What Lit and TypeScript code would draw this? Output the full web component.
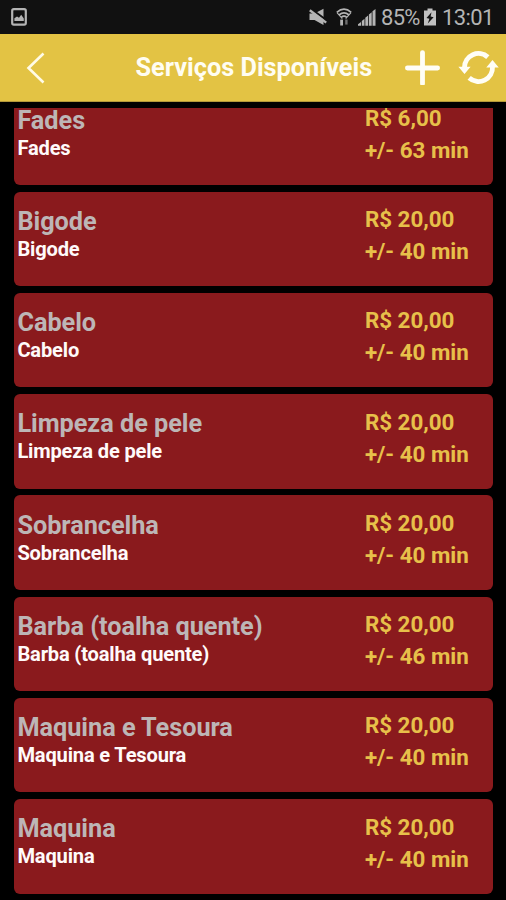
import { LitElement, html, css } from "lit";
import { customElement, property } from "lit/decorators.js";

interface Service {
  name: string;
  price: string;
  minutes: number;
}

const SERVICES: Service[] = [
  { name: "Fades", price: "6,00", minutes: 63 },
  { name: "Bigode", price: "20,00", minutes: 40 },
  { name: "Cabelo", price: "20,00", minutes: 40 },
  { name: "Limpeza de pele", price: "20,00", minutes: 40 },
  { name: "Sobrancelha", price: "20,00", minutes: 40 },
  { name: "Barba (toalha quente)", price: "20,00", minutes: 46 },
  { name: "Maquina e Tesoura", price: "20,00", minutes: 40 },
  { name: "Maquina", price: "20,00", minutes: 40 },
];

@customElement("status-bar")
class StatusBar extends LitElement {
  static styles = css`
    :host {
      display: flex;
      align-items: center;
      height: 34px;
      box-sizing: border-box;
      padding: 0 12px 0 11px;
      background: #111;
      color: #b4b4b4;
      font: 400 22px/34px Roboto, sans-serif;
      white-space: nowrap;
    }
    svg { display: block; flex: none; }
    .spacer { flex: 1; }
    .mute { margin-right: 9px; }
    .wifi { margin-right: 6px; }
    .signal { margin-right: 5px; }
    .percent { width: 39px; padding-top: 1px; letter-spacing: -0.7px; margin-right: 4px; }
    .battery { margin-right: 6px; }
    .clock { width: 52px; padding-top: 1px; letter-spacing: -0.6px; }
  `;

  render() {
    return html`
      <svg width="17" height="18" viewBox="0 0 17 18">
        <rect x="1.2" y="1.2" width="13.6" height="15.4" rx="1.6" fill="none" stroke="#b4b4b4" stroke-width="2.2" />
        <path d="M3.4 13 V10.2 L6 8.4 L8 9.8 L10.2 6.8 L12.8 10.4 V13 Z" fill="#b4b4b4" />
      </svg>
      <span class="spacer"></span>
      <svg class="mute" width="18" height="18" viewBox="0 0 18 18">
        <path d="M0.5 5.6 H5.5 L14.5 0.8 V17 L5.5 12 H0.5 Z" fill="#b4b4b4" />
        <path d="M1.6 0.6 L18 12.6" stroke="#111" stroke-width="2" />
        <path d="M0.8 2.2 L17.2 14.6" stroke="#b4b4b4" stroke-width="2.4" />
      </svg>
      <svg class="wifi" width="16" height="18" viewBox="0 0 16 18">
        <g fill="none" stroke="#b4b4b4" stroke-width="1.7">
          <path d="M0.8 4.4 Q8 -2 15.2 4.4" />
          <path d="M3 7 Q8 2.6 13 7" />
          <path d="M5.2 9.3 Q8 7 10.8 9.3" />
        </g>
        <path d="M1 4.6 L6.3 10.6 M15 4.6 L9.7 10.6" stroke="#b4b4b4" stroke-width="1.1" />
        <path d="M5.6 11.6 V17.5" stroke="#b4b4b4" stroke-width="2.8" />
        <path d="M10.4 16.6 V11.5" stroke="#707070" stroke-width="2.4" />
      </svg>
      <svg class="signal" width="18" height="17" viewBox="0 0 18 17">
        <path d="M0 16.8 V15.2 L3 13 V16.8 Z M3.8 16.8 V12 L6.5 9.8 V16.8 Z M7.3 16.8 V8.8 L10.1 6.4 V16.8 Z M10.9 16.8 V5.6 L13.7 3.2 V16.8 Z M14.5 16.8 V2.2 L17.5 0 V16.8 Z" fill="#b4b4b4" />
      </svg>
      <span class="percent">85%</span>
      <svg class="battery" width="12" height="18" viewBox="0 0 12 18">
        <path d="M3.5 0.5 H8.5 V2.5 H12 V17.5 H0 V2.5 H3.5 Z" fill="#c0c0c0" />
        <path d="M7.5 4.3 L2.5 10 L5.4 10.8 L3.8 15.6 L9.6 9.3 L6.6 8.6 Z" fill="#111" />
      </svg>
      <span class="clock">13:01</span>
    `;
  }
}

@customElement("title-bar")
class TitleBar extends LitElement {
  static styles = css`
    :host {
      display: flex;
      align-items: center;
      height: 68px;
      box-sizing: border-box;
      padding: 0 7px 0 26px;
      background: #e3c344;
      border-bottom: 1px solid #b3983a;
      color: #fffdf2;
    }
    svg { display: block; flex: none; }
    h1 {
      flex: 1;
      margin: 0 0 0 90.5px;
      padding-top: 1px;
      font: 700 25.3px/34px Roboto, sans-serif;
      white-space: nowrap;
    }
    .add { margin-right: 18px; }
  `;

  render() {
    return html`
      <svg width="19" height="32" viewBox="0 0 19 32">
        <path d="M17.5 1.5 L2.5 16 L17.5 30.5" fill="none" stroke="#fffbe6" stroke-width="2.6" />
      </svg>
      <h1>Serviços Disponíveis</h1>
      <svg class="add" width="35" height="35" viewBox="0 0 35 35">
        <path d="M17.5 2.6 V33.4 M2.4 18 H32.6" stroke="#fffef6" stroke-width="4.8" stroke-linecap="round" />
      </svg>
      <svg width="41" height="35" viewBox="0 0 42 36">
        <g fill="none" stroke="#fffef6" stroke-width="5">
          <path d="M6.6 18 A14.4 14.4 0 0 1 30.6 7.3" />
          <path d="M35.4 17 A14.4 14.4 0 0 1 11.4 28.7" />
        </g>
        <path d="M0.3 17.2 H12.9 L6.6 24.8 Z M29 18 L35.4 10.4 L41.8 18 Z" fill="#fffef6" />
      </svg>
    `;
  }
}

@customElement("service-card")
class ServiceCard extends LitElement {
  @property({ attribute: false }) service!: Service;

  static styles = css`
    :host {
      display: flex;
      flex: none;
      height: 94.5px;
      box-sizing: border-box;
      padding: 0 0 0 3px;
      border-radius: 6px;
      background: #8a1a1d;
      font-family: Roboto, sans-serif;
      font-weight: 700;
      white-space: nowrap;
    }
    .info { width: 347.5px; padding-top: 15.3px; }
    .name { font-size: 25.3px; line-height: 30px; letter-spacing: -0.04px; color: #bdb6b6; }
    .detail { font-size: 20.1px; line-height: 24.4px; letter-spacing: -0.17px; color: #fffafa; }
    .cost { padding-top: 11.5px; font-size: 22.4px; line-height: 32.2px; letter-spacing: -0.02px; color: #e7c04a; }
  `;

  render() {
    const { name, price, minutes } = this.service;
    return html`
      <div class="info">
        <div class="name">${name}</div>
        <div class="detail">${name}</div>
      </div>
      <div class="cost">
        <div>R$ ${price}</div>
        <div>+/- ${minutes} min</div>
      </div>
    `;
  }
}

@customElement("app-root")
class AppRoot extends LitElement {
  static styles = css`
    :host {
      display: flex;
      flex-direction: column;
      height: 900px;
      background: #000;
      overflow: hidden;
    }
    .list {
      flex: 1;
      min-height: 0;
      margin-top: 6px;
      padding: 0 13.5px 6.5px 14.4px;
      display: flex;
      flex-direction: column;
      justify-content: flex-end;
      gap: 6.75px;
      overflow: hidden;
    }
  `;

  render() {
    return html`
      <status-bar></status-bar>
      <title-bar></title-bar>
      <div class="list">
        ${SERVICES.map((s) => html`<service-card .service=${s}></service-card>`)}
      </div>
    `;
  }
}
